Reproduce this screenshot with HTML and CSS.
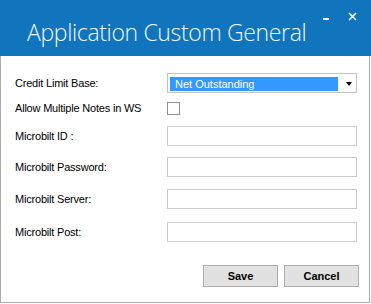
FILE: index.html
```html
<!DOCTYPE html>
<html>
<head>
<meta charset="utf-8">
<link rel="stylesheet" href="styles.css">
</head>
<body>
<div class="window">
  <header class="titlebar">
    <h1 class="title">Application Custom General</h1>
    <div class="controls">
      <span class="min"></span>
      <svg class="close" width="9" height="9" viewBox="0 0 9 9"><path d="M1 1 L8 8 M8 1 L1 8" stroke="#fff" stroke-width="1.6" fill="none"/></svg>
    </div>
  </header>
  <main class="content">
    <div class="form">
      <label class="label">Credit Limit Base:</label>
      <div class="combo">
        <span class="combo-value">Net Outstanding</span>
        <span class="combo-arrow"></span>
      </div>

      <label class="label">Allow Multiple Notes in WS</label>
      <div class="check-cell"><span class="checkbox"></span></div>

      <label class="label">Microbilt ID :</label>
      <div class="textbox"></div>

      <label class="label">Microbilt Password:</label>
      <div class="textbox"></div>

      <label class="label">Microbilt Server:</label>
      <div class="textbox"></div>

      <label class="label">Microbilt Post:</label>
      <div class="textbox"></div>
    </div>
    <div class="actions">
      <button class="btn">Save</button>
      <button class="btn">Cancel</button>
    </div>
  </main>
</div>
</body>
</html>
```
FILE: styles.css
```css
html, body {
  margin: 0;
  padding: 0;
  background: #ffffff;
}

.window {
  width: 371px;
  height: 304px;
  display: flex;
  flex-direction: column;
  font-family: "Liberation Sans", Arial, sans-serif;
}

.titlebar {
  height: 56px;
  background: #1175bd;
  display: flex;
  justify-content: space-between;
  flex-shrink: 0;
}

.title {
  margin: 0;
  padding: 16px 0 0 27px;
  font-family: "Open Sans", "Noto Sans", sans-serif;
  font-weight: 300;
  font-size: 23px;
  letter-spacing: -0.35px;
  line-height: 32px;
  color: #f2f7fb;
  white-space: nowrap;
}

.controls {
  display: flex;
  align-items: flex-start;
  padding: 12px 14px 0 0;
  gap: 19px;
}

.min {
  display: block;
  width: 6px;
  height: 2px;
  background: #ffffff;
  margin-top: 6px;
}

.close {
  display: block;
}

.content {
  width: 370px;
  height: 247px;
  box-sizing: border-box;
  border: 1px solid #ababab;
  border-top: none;
  display: flex;
  flex-direction: column;
}

.form {
  display: grid;
  grid-template-columns: 152px 190px;
  grid-template-rows: 20px 25px 28px 31px 32px 33px;
  align-items: end;
  padding: 17px 0 0 14px;
}

.label {
  font-size: 11px;
  letter-spacing: -0.2px;
  line-height: 20px;
  height: 20px;
  color: #000;
  white-space: nowrap;
}

.combo {
  height: 20px;
  box-sizing: border-box;
  border: 1px solid #c3c3c3;
  display: flex;
  align-items: center;
  padding: 2px 4px 1px 2px;
}

.combo-value {
  flex: 0 0 168px;
  height: 14px;
  margin-top: 1px;
  background: #3399ff;
  color: #ffffff;
  font-size: 11px;
  line-height: 14px;
  padding-left: 5px;
  box-sizing: border-box;
}

.combo-arrow {
  margin-left: auto;
  width: 0;
  height: 0;
  border-left: 3.5px solid transparent;
  border-right: 3.5px solid transparent;
  border-top: 4px solid #000;
}

.check-cell {
  height: 20px;
  display: flex;
  align-items: center;
}

.checkbox {
  display: block;
  width: 13px;
  height: 13px;
  box-sizing: border-box;
  border: 1px solid #8f8f8f;
  background: #fff;
}

.textbox {
  height: 20px;
  box-sizing: border-box;
  border: 1px solid #cccccc;
  background: #fff;
}

.actions {
  display: flex;
  justify-content: flex-end;
  gap: 6px;
  margin-top: auto;
  padding: 0 10px 15px 0;
}

.btn {
  width: 75px;
  height: 22px;
  box-sizing: border-box;
  border: 1px solid #adadad;
  background: #e1e1e1;
  font-family: "Liberation Sans", Arial, sans-serif;
  font-weight: bold;
  font-size: 11px;
  color: #000;
  padding: 0;
  border-radius: 0;
}
```
